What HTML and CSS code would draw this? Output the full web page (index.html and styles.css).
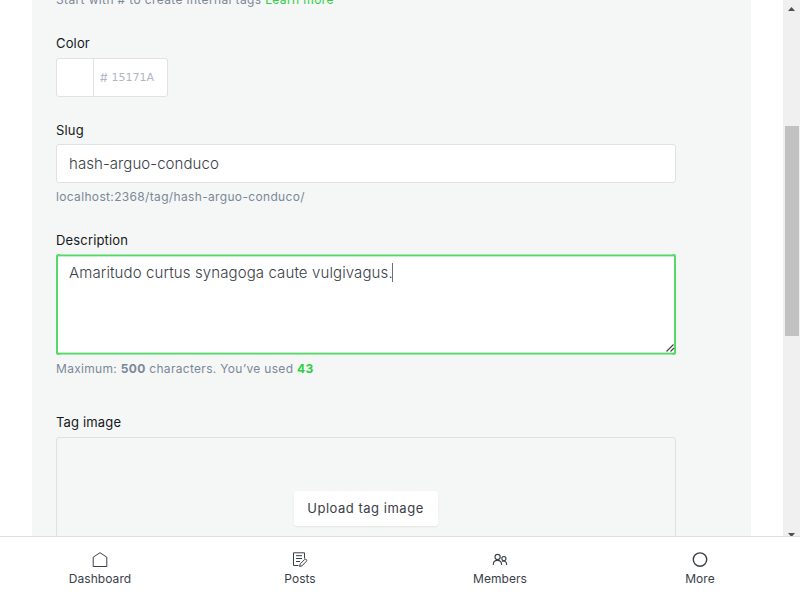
FILE: index.html
```
<!DOCTYPE html>
<html lang="en">
<head>
<meta charset="utf-8">
<title>Tag settings</title>
<link rel="stylesheet" href="styles.css">
</head>
<body>
<div class="app">
  <main class="viewport">
    <section class="panel">
      <p class="hint hint-top">Start with # to create internal tags <a class="link">Learn more</a></p>
      <div class="group group-color">
        <label class="label">Color</label>
        <div class="color-field"><span class="swatch"></span><span class="hex"><span class="hash">#</span><span class="code">15171A</span></span></div>
      </div>
      <div class="group group-slug">
        <label class="label">Slug</label>
        <div class="input slug">hash-arguo-conduco</div>
        <p class="hint">localhost:2368/tag/hash-arguo-conduco/</p>
      </div>
      <div class="group group-description">
        <label class="label">Description</label>
        <div class="input description"><span class="value">Amaritudo curtus synagoga caute vulgivagus.</span><i class="caret"></i>
          <svg class="grip" width="9" height="8" viewBox="0 0 9 8"><path d="M.5 7.5l7-7M4.5 7.5l3.5-3.5" fill="none" stroke="#444" stroke-width="1.2"/></svg>
        </div>
        <p class="hint count-hint">Maximum: <b>500</b> characters. You’ve used <b class="count">43</b></p>
      </div>
      <div class="group group-image">
        <label class="label label-image">Tag image</label>
        <div class="dropzone"><span class="upload">Upload tag image</span></div>
      </div>
    </section>
    <div class="scrollbar">
      <svg class="arrow-up" width="7" height="4" viewBox="0 0 7 4"><path d="M0 4L3.5 0L7 4z" fill="#505050"/></svg>
      <span class="thumb"></span>
      <svg class="arrow-down" width="7" height="4" viewBox="0 0 7 4"><path d="M0 0h7L3.5 4z" fill="#505050"/></svg>
    </div>
  </main>
  <nav class="nav">
    <a class="item"><svg class="icon" viewBox="0 0 16 16"><path d="M1.2 5.2L8 .7l6.8 4.5v9.3H1.2z"/></svg><span>Dashboard</span></a>
    <a class="item"><svg class="icon" viewBox="0 0 16 16"><path d="M6.5 13.5h-5V.8h11v5.7M4 3.7h6M4 6.5h6M4 9.5h4M7.6 14.5l.6-2.6 4.5-4.4c1.2-1 2.7.5 1.7 1.7l-4.4 4.6z"/></svg><span>Posts</span></a>
    <a class="item"><svg class="icon members" viewBox="0 0 16 16"><circle cx="5.6" cy="5" r="2.6"/><path d="M1.3 13v-.7c0-5.3 8.2-5.3 8.2 0v.7M10.2 9.6c2-1.3 4.4 0 4.4 2.2V13"/><circle cx="11.9" cy="6.6" r="2.1"/></svg><span>Members</span></a>
    <a class="item"><svg class="icon more" viewBox="0 0 16 16"><circle cx="8" cy="7.6" r="6.7"/></svg><span>More</span></a>
  </nav>
</div>
</body>
</html>
```
FILE: styles.css
```
* { box-sizing: border-box; }
body { margin: 0; font-family: Inter, sans-serif; color: #394047; background: #fff; overflow: hidden; }
p { margin: 0; }
.app { width: 800px; height: 600px; display: grid; grid-template-rows: 536px 64px; }
.viewport { display: flex; overflow: hidden; padding-left: 32px; }
.panel { width: 719px; flex: none; height: 620px; padding: 0 75px 0 24px; background: #f4f7f6; }
.hint { font-size: 12px; line-height: 18px; letter-spacing: .34px; color: #7c8796; margin-top: 5px; white-space: nowrap; }
.hint-top { margin-top: -9px; letter-spacing: .37px; }
.count-hint { letter-spacing: .31px; }
.link { color: #30cf43; }
.label { display: block; font-size: 13px; font-weight: 400; line-height: 17px; letter-spacing: .16px; color: #15171a; margin-bottom: 5px; }
.group-color { margin-top: 26px; }
.group-color .label, .label-image { margin-bottom: 6px; }
.color-field { width: 112px; height: 39px; display: flex; border: 1px solid #dfe1e3; border-radius: 3px; background: #fff; }
.swatch { width: 37px; border-right: 1px solid #dfe1e3; }
.hex { display: flex; align-items: center; gap: 4px; padding-left: 6px; font-size: 11px; color: #aeb7c1; font-family: "DejaVu Sans", sans-serif; }
.hash { font-family: Inter, sans-serif; font-size: 12px; }
.group-slug { margin-top: 25px; }
.input { width: 620px; background: #fff; border: 1px solid #dfe1e3; border-radius: 3px; font-size: 15px; font-weight: 300; letter-spacing: .11px; padding: 0 12px; }
.slug { height: 39px; line-height: 37px; letter-spacing: .07px; }
.group-description { margin-top: 26px; }
.description { position: relative; height: 101px; border: 0; line-height: 20px; padding: 9px 13px; display: flex; box-shadow: inset 2px 0 #57d869, inset -2px 0 #57d869, inset 0 1px #a0e9aa, inset 0 -1px #a0e9aa, inset 0 2px #57d869, inset 0 -2px #57d869, inset 0 3px #c0f0c7, inset 0 -3px #c0f0c7; }
.caret { width: 1px; height: 19px; margin-left: -1px; background: #6b7076; }
.grip { position: absolute; right: 1px; bottom: 3px; }
.count { color: #30cf43; }
.group-image { margin-top: 36px; }
.dropzone { width: 620px; height: 143px; display: flex; align-items: center; justify-content: center; border: 1px solid #dde1e3; border-radius: 3px; }
.upload { height: 35px; width: 144px; line-height: 35px; margin-right: 1px; text-align: center; background: #fff; border-radius: 3px; font-size: 13px; font-weight: 400; letter-spacing: .52px; box-shadow: 0 1px 2px #00000014; }
.scrollbar { width: 17px; height: 536px; margin-left: auto; display: flex; flex-direction: column; align-items: center; background: #f0f0f0; }
.scrollbar > * { flex: none; }
.arrow-up { margin-top: 7px; }
.thumb { width: 14px; height: 210px; margin-top: 115px; background: #c1c1c1; }
.arrow-down { margin-top: 197px; }
.nav { display: grid; grid-template-columns: repeat(4, 1fr); border-top: 1px solid #dddfe2; background: #fff; }
.item { display: flex; flex-direction: column; align-items: center; padding-top: 15px; font-size: 12px; line-height: 16px; letter-spacing: .05px; }
.icon { width: 16px; height: 16px; margin-bottom: 3px; fill: none; stroke: #394047; stroke-width: 1; }
.members { stroke-width: 1.1; }
.more { stroke-width: 1.4; }
```
